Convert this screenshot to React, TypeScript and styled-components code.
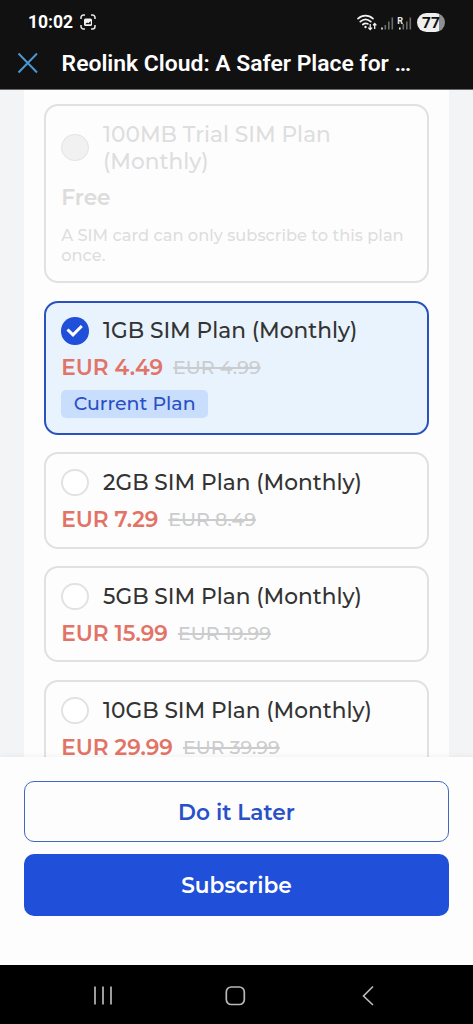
import React from 'react';
import styled, { createGlobalStyle } from 'styled-components';

const GlobalStyle = createGlobalStyle`
  * { box-sizing: border-box; }
  body { margin: 0; background: #fdfdfd; }
  button { font: inherit; padding: 0; border: 0; background: none; }
`;

const Screen = styled.div`
  display: flex;
  flex-direction: column;
  width: 473px;
  height: 1024px;
  overflow: hidden;
  background: #fdfdfd;
  font-family: Montserrat, Inter, sans-serif;
`;

const Header = styled.header`
  flex: none;
  height: 90px;
  background: #111;
  border-bottom: 1px solid #6c6a6c;
  color: #fff;
  font-family: Roboto, sans-serif;
`;

const StatusBar = styled.div`
  display: flex;
  align-items: center;
  height: 44px;
  padding: 0 28px;
`;

const Clock = styled.span`
  flex: none;
  width: 52px;
  font-size: 17.5px;
  font-weight: 700;
`;

const StatusIcons = styled.div`
  display: flex;
  align-items: center;
  margin-left: auto;
`;

const Battery = styled.span`
  width: 28px;
  height: 19px;
  margin-left: 5.5px;
  border-radius: 10px;
  background: linear-gradient(90deg, #efefef 78%, #8f8f8f 78%);
  color: #111;
  font-size: 15.5px;
  font-weight: 700;
  line-height: 20px;
  text-align: center;
`;

const TitleBar = styled.div`
  display: flex;
  align-items: center;
  height: 38px;
  padding-left: 17px;
`;

const PageTitle = styled.h1`
  margin: 0 0 0 22.6px;
  font-size: 22.9px;
  font-weight: 600;
  line-height: 38px;
  padding-top: 1px;
  white-space: nowrap;
`;

const Content = styled.main`
  flex: none;
  height: 667px;
  padding: 0 24.4px;
  overflow: hidden;
  background: #f2f4f6;
`;

const Sheet = styled.div`
  display: flex;
  flex-direction: column;
  gap: 17.6px;
  padding: 14px 19.8px 0;
  background: #fdfdfd;
`;

const Card = styled.section<{ $selected?: boolean; $height: number }>`
  flex: none;
  height: ${p => p.$height}px;
  padding: 14.5px 15px 0;
  border: 2px solid ${p => (p.$selected ? '#2a52be' : '#e1e1e1')};
  border-radius: 14px;
  background: ${p => (p.$selected ? '#e8f3fe' : '#fdfdfd')};
`;

const PlanHead = styled.div`
  display: flex;
  align-items: center;
  gap: 14.3px;
`;

const Radio = styled.span<{ $state?: 'on' | 'disabled' }>`
  display: grid;
  place-items: center;
  flex: none;
  width: 27.5px;
  height: 27.5px;
  border: ${p => (p.$state === 'disabled' ? '1px solid #e2e2e2' : '2px solid #e2e2e2')};
  border-radius: 50%;
  background: ${p => (p.$state === 'disabled' ? '#f1f1f1' : '#fff')};
  ${p => p.$state === 'on' && 'border: 0; background: #204fd9;'}
`;

const PlanName = styled.h2<{ $muted?: boolean }>`
  margin: 0;
  color: ${p => (p.$muted ? '#dedede' : '#333')};
  font-size: 21.67px;
  font-weight: 500;
  line-height: 27px;
  white-space: nowrap;
`;

const PriceRow = styled.div`
  display: flex;
  align-items: center;
  gap: 10px;
  height: 27px;
  margin-top: 9px;
  white-space: nowrap;
`;

const Price = styled.span<{ $muted?: boolean }>`
  color: ${p => (p.$muted ? '#dcdcdc' : '#e27367')};
  font-size: 21.67px;
  font-weight: 600;
`;

const OldPrice = styled.s`
  color: #cbcccd;
  font-size: 19px;
  font-weight: 500;
  padding-top: 1px;
  text-decoration-thickness: 2px;
`;

const Note = styled.p`
  margin: 14.2px 0 0;
  color: #dedede;
  font-size: 16.25px;
  font-weight: 500;
  line-height: 20px;
  white-space: nowrap;
`;

const Badge = styled.span`
  display: block;
  width: 147px;
  height: 28px;
  margin-top: 9.3px;
  border-radius: 5px;
  background: #c9defc;
  color: #2a50c4;
  font-size: 18.95px;
  font-weight: 500;
  line-height: 28px;
  text-align: center;
`;

const Actions = styled.footer`
  display: flex;
  flex-direction: column;
  gap: 12px;
  flex: none;
  height: 208px;
  padding: 24px 24.4px 0;
  background: #fdfdfd;
  box-shadow: 0 -1px 5px rgba(0, 0, 0, 0.05);
  z-index: 1;
`;

const ActionButton = styled.button<{ $primary?: boolean }>`
  height: 61.3px;
  border-radius: 10px;
  ${p => (p.$primary
    ? 'background: #204fd9; color: #fff;'
    : 'border: 1px solid #4267bd; color: #2850c8;')}
  font-size: 21.67px;
  font-weight: 600;
`;

const NavBar = styled.nav`
  flex: none;
  height: 59px;
  background: #000;
`;

interface Plan {
  name: string;
  price: string;
  old: string;
  height: number;
  current?: boolean;
}

const plans: Plan[] = [
  { name: '1GB SIM Plan (Monthly)', price: 'EUR 4.49', old: 'EUR 4.99', height: 134, current: true },
  { name: '2GB SIM Plan (Monthly)', price: 'EUR 7.29', old: 'EUR 8.49', height: 96.3 },
  { name: '5GB SIM Plan (Monthly)', price: 'EUR 15.99', old: 'EUR 19.99', height: 96.3 },
  { name: '10GB SIM Plan (Monthly)', price: 'EUR 29.99', old: 'EUR 39.99', height: 96.3 },
];

const CaptureIcon = () => (
  <svg width="16" height="16" viewBox="0 0 16 16" fill="none" stroke="#e8e8e8" strokeWidth="1.5">
    <path d="M1 5V3.5A2.5 2.5 0 0 1 3.500 1H5M11 1h1.500A2.500 2.500 0 0 1 15 3.500V5M15 11v1.500a2.500 2.500 0 0 1-2.500 2.500H11M5 15H3.500A2.500 2.500 0 0 1 1 12.500V11" />
    <rect x="4" y="4.500" width="8" height="7.500" rx="1.500" fill="#f4f4f4" stroke="none" />
    <path d="m5.200 10.300 1.800-1.800 1.300.8 2.500-2.200v3.200z" fill="#111" stroke="none" />
  </svg>
);

const SignalIcons = () => (
  <svg width="56" height="20" viewBox="0 0 56 20" fill="none">
    <g stroke="#f2f2f2" strokeWidth="1.700" strokeLinecap="round">
      <path d="M2 6.700c4.400-4.100 10.600-4.100 15 0M4.300 9.700c3.200-2.900 7.300-2.900 10.500 0M6.800 12.500c1.500-1.300 3.400-1.500 5-.7" />
    </g>
    <circle cx="9.500" cy="15" r="1.200" fill="#f2f2f2" />
    <path d="M14.200 12v5.500m-1.900-1.900 1.900 1.900 1.900-1.900M18.700 17v-5.500m-1.700 1.900 1.700-1.900 1.700 1.900" stroke="#f2f2f2" strokeWidth="1.300" />
    <g fill="#6d6d6d">
      <path d="M28.500 13h1.600v4.500h-1.600zM32 9.500h1.600v8H32zM35.500 5.500h1.600v12h-1.600zM46.500 12h1.600v5.500h-1.600zM50 9.500h1.600v8H50zM53.500 5.500h1.600v12h-1.600z" />
    </g>
    <path d="M25.200 15.500h1.600v2h-1.600zM43 15.500h1.600v2H43z" fill="#eee" />
    <text x="41.300" y="11.500" fill="#eee" fontFamily="Roboto" fontSize="9" fontWeight="700">R</text>
  </svg>
);

export default function App() {
  return (
    <Screen>
      <GlobalStyle />
      <Header>
        <StatusBar>
          <Clock>10:02</Clock>
          <CaptureIcon />
          <StatusIcons>
            <SignalIcons />
            <Battery>77</Battery>
          </StatusIcons>
        </StatusBar>
        <TitleBar>
          <svg width="22" height="22" viewBox="0 0 22 22" fill="none" stroke="#4a98d2" strokeWidth="2">
            <path d="m1.500 1.500 18.500 19M20 1.500l-18.500 19" />
          </svg>
          <PageTitle>Reolink Cloud: A Safer Place for …</PageTitle>
        </TitleBar>
      </Header>
      <Content>
        <Sheet>
          <Card $height={179.100}>
            <PlanHead>
              <Radio $state="disabled" />
              <PlanName $muted>100MB Trial SIM Plan<br />(Monthly)</PlanName>
            </PlanHead>
            <PriceRow><Price $muted>Free</Price></PriceRow>
            <Note>A SIM card can only subscribe to this plan<br />once.</Note>
          </Card>
          {plans.map(plan => (
            <Card key={plan.name} $selected={plan.current} $height={plan.height}>
              <PlanHead>
                <Radio $state={plan.current ? 'on' : undefined}>
                  {plan.current && (
                    <svg width="17" height="13" viewBox="0 0 17 13" fill="none" stroke="#fff" strokeWidth="3">
                      <path d="m1.500 5.500 5.500 5.300L15.800 2" />
                    </svg>
                  )}
                </Radio>
                <PlanName>{plan.name}</PlanName>
              </PlanHead>
              <PriceRow>
                <Price>{plan.price}</Price>
                <OldPrice>{plan.old}</OldPrice>
              </PriceRow>
              {plan.current && <Badge>Current Plan</Badge>}
            </Card>
          ))}
        </Sheet>
      </Content>
      <Actions>
        <ActionButton>Do it Later</ActionButton>
        <ActionButton $primary>Subscribe</ActionButton>
      </Actions>
      <NavBar>
        <svg width="473" height="59" viewBox="0 0 473 59" fill="none" stroke="#b8b8b8" strokeWidth="1.700">
          <path d="M95 21.500v18M103 21.500v18M111 21.500v18M373 21.500l-9.500 9.500 9.500 9" />
          <rect x="226.300" y="22" width="18" height="17.500" rx="5" />
        </svg>
      </NavBar>
    </Screen>
  );
}
